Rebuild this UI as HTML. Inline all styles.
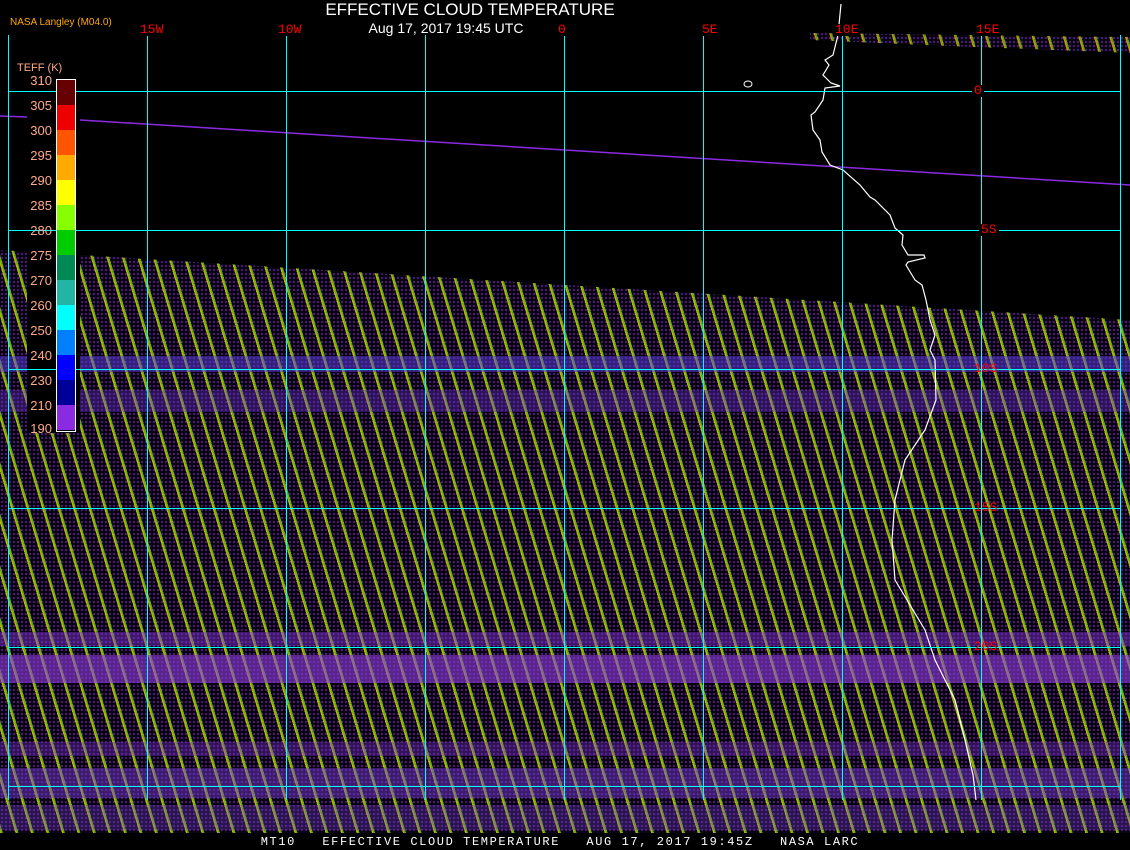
<!DOCTYPE html>
<html><head><meta charset="utf-8"><style>
html,body{margin:0;padding:0;background:#000;}
#c{position:relative;width:1130px;height:850px;overflow:hidden;background:#000;font-family:"Liberation Sans",sans-serif;}
.abs{position:absolute;white-space:nowrap;}
.data{position:absolute;left:0;top:0;width:1130px;height:833px;
background:
repeating-linear-gradient(73.3deg,rgba(230,220,0,0.8) 0 1.3px,rgba(120,230,0,0.75) 1.3px 2.8px,rgba(0,0,0,0) 2.8px 14.85px),
radial-gradient(circle,#7a2fd0 0.7px,rgba(0,0,0,0) 0.9px) 0 0/4px 4px,
#0a0510;
clip-path:polygon(0 250px,1130px 320px,1130px 833px,0 833px);}
.top{position:absolute;left:0;top:0;width:1130px;height:60px;
background:repeating-linear-gradient(73.3deg,rgba(255,170,0,0.8) 0 1.3px,rgba(120,230,0,0.7) 1.3px 2.8px,rgba(0,0,0,0) 2.8px 14.85px),
radial-gradient(circle,#7a2fd0 0.7px,rgba(0,0,0,0) 0.9px) 0 0/4px 4px,#0a0510;
clip-path:polygon(810px 33px,1130px 37px,1130px 53px,900px 44px,810px 40px);}
.band{position:absolute;left:0;width:1130px;background:rgba(130,50,220,0.45);}
.vl{position:absolute;width:1px;background:#00ffff;top:35px;height:765px;}
.hl{position:absolute;height:1px;background:#00ffff;left:8px;width:1112px;}
.lab{position:absolute;color:#ff0000;font-family:"Liberation Mono",monospace;font-size:13px;background:#000;padding:0 2px;line-height:12px;}
.cb{position:absolute;left:57px;width:18px;height:25px;}
.cl{position:absolute;left:18px;width:34px;text-align:right;color:#ffaa88;font-size:13px;line-height:13px;}
</style></head><body><div id="c">
<div class="data"></div>
<div class="top"></div>
<div class="band" style="top:356px;height:16px;background:rgba(90,60,230,0.5)"></div>
<div class="band" style="top:390px;height:22px;background:rgba(110,50,220,0.35)"></div>
<div class="band" style="top:632px;height:14px"></div>
<div class="band" style="top:655px;height:28px;background:rgba(140,60,220,0.6)"></div>
<div class="band" style="top:742px;height:14px;background:rgba(130,50,220,0.35)"></div>
<div class="band" style="top:768px;height:30px;background:rgba(120,60,220,0.45)"></div>
<div class="band" style="top:805px;height:25px;background:rgba(120,60,220,0.3)"></div>
<div class="abs" style="left:27px;top:240px;width:53px;height:193px;background:#000"></div>

<svg class="abs" style="left:0;top:0" width="1130" height="850">
<polyline points="0,116 27,117" stroke="#8a2be2" stroke-width="1.5" fill="none"/>
<polyline points="80,120 1130,185" stroke="#8a2be2" stroke-width="1.5" fill="none"/>
<polyline fill="none" stroke="#fff" stroke-width="1.2" points="841,4 838,35 833,55 825,60 829,65 823,75 831,83 840,86 825,88 823,100 815,112 811,115 813,130 820,140 822,152 830,165 843,170 860,185 870,197 875,200 890,215 895,228 903,235 902,245 908,255 924,255 925,258 908,262 906,265 915,280 922,285 926,300 930,320 935,335 930,350 935,360 936,400 925,430 905,460 895,500 892,540 895,580 910,605 925,630 935,660 955,700 965,740 973,775 976,800"/>
<ellipse cx="748" cy="84" rx="4" ry="3" fill="none" stroke="#fff" stroke-width="1"/>
</svg>

<div class="vl" style="left:8px"></div>
<div class="vl" style="left:147px"></div>
<div class="vl" style="left:286px"></div>
<div class="vl" style="left:425px"></div>
<div class="vl" style="left:564px"></div>
<div class="vl" style="left:703px"></div>
<div class="vl" style="left:842px"></div>
<div class="vl" style="left:981px"></div>
<div class="vl" style="left:1120px"></div>
<div class="hl" style="top:91px"></div>
<div class="hl" style="top:230px"></div>
<div class="hl" style="top:369px"></div>
<div class="hl" style="top:508px"></div>
<div class="hl" style="top:647px"></div>
<div class="hl" style="top:786px"></div>

<div class="lab" style="left:138px;top:24px">15W</div>
<div class="lab" style="left:276px;top:24px">10W</div>
<div class="lab" style="left:556px;top:24px">0</div>
<div class="lab" style="left:700px;top:24px">5E</div>
<div class="lab" style="left:833px;top:24px">10E</div>
<div class="lab" style="left:974px;top:24px">15E</div>
<div class="lab" style="left:972px;top:85px">0</div>
<div class="lab" style="left:979px;top:224px">5S</div>
<div class="lab" style="left:972px;top:363px;background:none">10S</div>
<div class="lab" style="left:972px;top:502px;background:none">15S</div>
<div class="lab" style="left:972px;top:641px;background:none">20S</div>

<div class="abs" style="left:300px;top:1px;width:340px;text-align:center;color:#fff;font-size:17px;line-height:18px;">EFFECTIVE CLOUD TEMPERATURE</div>
<div class="abs" style="left:346px;top:20px;width:200px;text-align:center;color:#fff;font-size:14px;line-height:16px;">Aug 17, 2017 19:45 UTC</div>
<div class="abs" style="left:10px;top:17px;color:#ffaa00;font-size:10px;line-height:12px;">NASA Langley (M04.0)</div>

<div class="abs" style="left:17px;top:62px;color:#ffaa88;font-size:11px;">TEFF (K)</div>
<div class="abs" style="left:56px;top:79px;width:18px;height:351px;border:1px solid #fff;"></div>
<div class="cb" style="top:80px;background:#660000"></div>
<div class="cb" style="top:105px;background:#ee0000"></div>
<div class="cb" style="top:130px;background:#ff5500"></div>
<div class="cb" style="top:155px;background:#ffaa00"></div>
<div class="cb" style="top:180px;background:#ffff00"></div>
<div class="cb" style="top:205px;background:#88ff00"></div>
<div class="cb" style="top:230px;background:#00cc00"></div>
<div class="cb" style="top:255px;background:#008855"></div>
<div class="cb" style="top:280px;background:#22b5a5"></div>
<div class="cb" style="top:305px;background:#00ffff"></div>
<div class="cb" style="top:330px;background:#0080ff"></div>
<div class="cb" style="top:355px;background:#0000ff"></div>
<div class="cb" style="top:380px;background:#000099"></div>
<div class="cb" style="top:405px;height:25px;background:#8a2be2"></div>
<div class="cl" style="top:74px">310</div>
<div class="cl" style="top:99px">305</div>
<div class="cl" style="top:124px">300</div>
<div class="cl" style="top:149px">295</div>
<div class="cl" style="top:174px">290</div>
<div class="cl" style="top:199px">285</div>
<div class="cl" style="top:224px">280</div>
<div class="cl" style="top:249px">275</div>
<div class="cl" style="top:274px">270</div>
<div class="cl" style="top:299px">260</div>
<div class="cl" style="top:324px">250</div>
<div class="cl" style="top:349px">240</div>
<div class="cl" style="top:374px">230</div>
<div class="cl" style="top:399px">210</div>
<div class="cl" style="top:422px">190</div>

<div class="abs" style="left:0;top:833px;width:1130px;height:17px;background:#000;"></div>
<div class="abs" style="left:0;top:835px;width:1120px;text-align:center;color:#fff;font-family:'Liberation Mono',monospace;font-size:12px;letter-spacing:1.6px;white-space:pre;line-height:14px;">MT10   EFFECTIVE CLOUD TEMPERATURE   AUG 17, 2017 19:45Z   NASA LARC</div>
</div></body></html>
